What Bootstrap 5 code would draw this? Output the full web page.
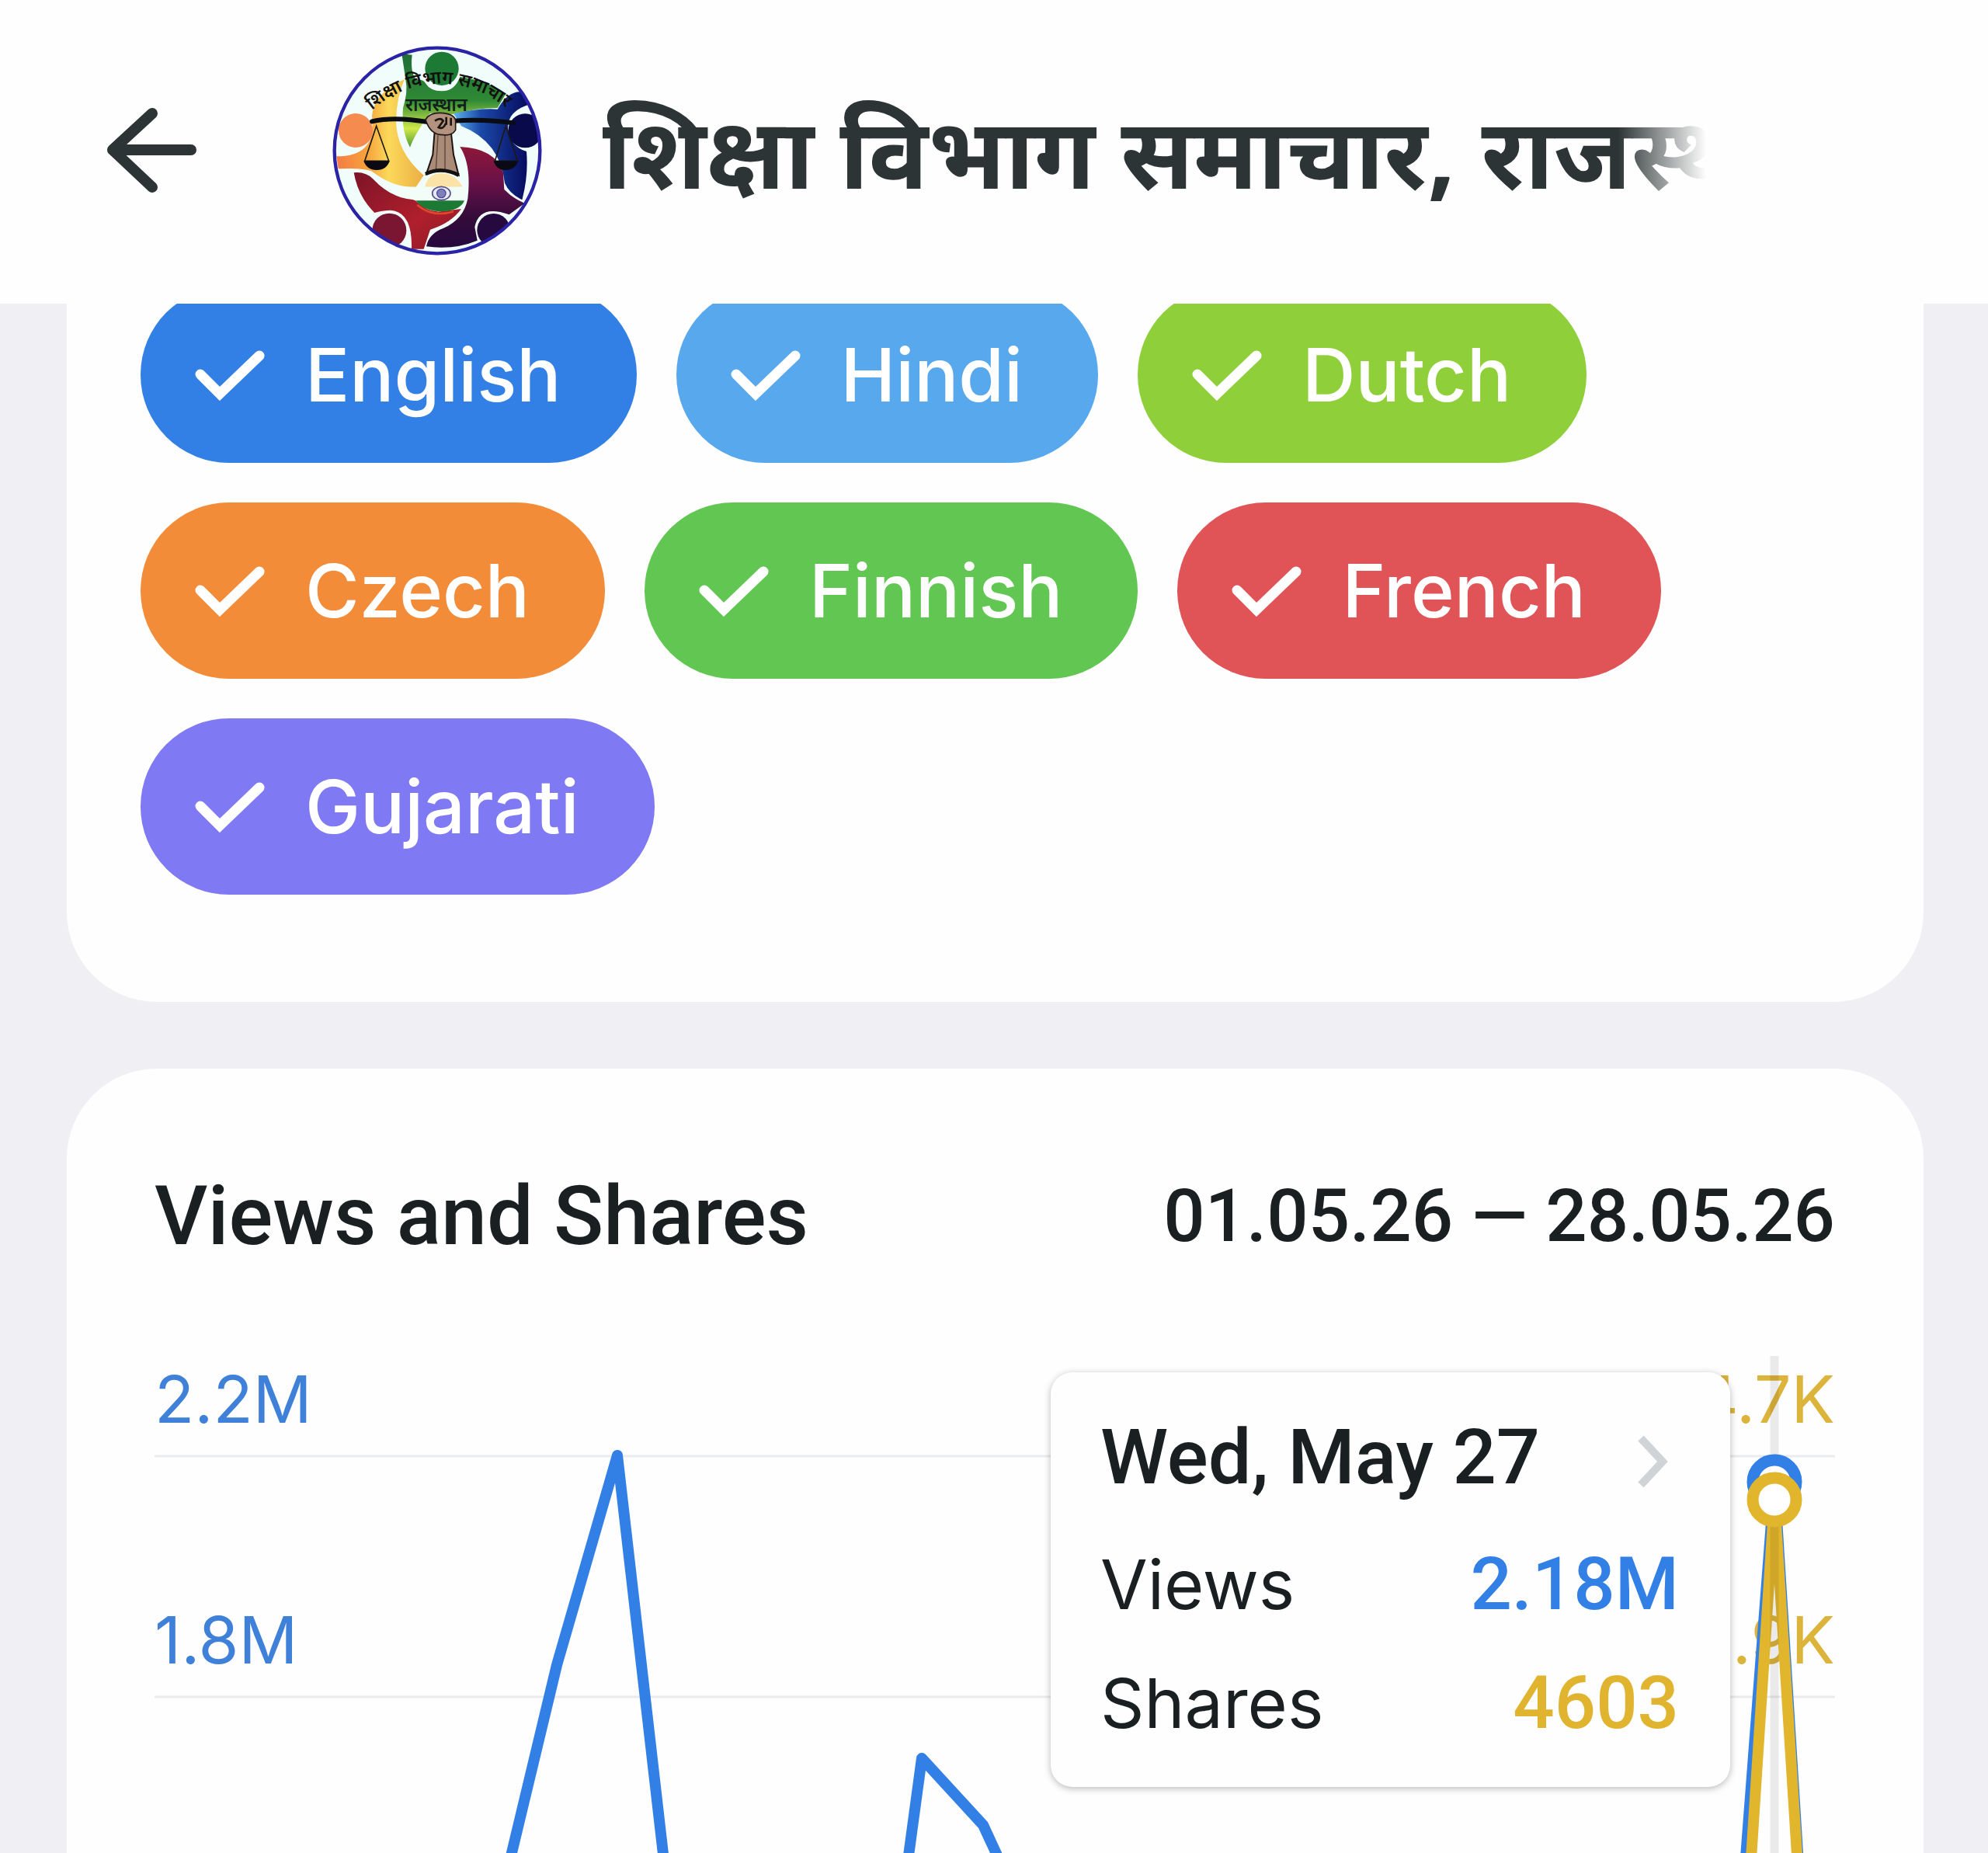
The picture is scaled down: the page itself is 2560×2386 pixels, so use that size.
<!DOCTYPE html>
<html lang="en">
<head>
    <meta charset="UTF-8">
    <meta name="viewport" content="width=device-width, initial-scale=1.0">
    <title>Statistics</title>
    <link href="https://cdn.jsdelivr.net/npm/bootstrap@5.3.0/dist/css/bootstrap.min.css" rel="stylesheet">
    <style>
        body {
            background-color: #f0f0f4;
            color: #1a1f22;
            font-family: Inter, "Liberation Sans", sans-serif;
        }
        .top-bar {
            height: 391px;
            flex-shrink: 0;
            padding: 0 363px 4px 137px;
            background-color: #fefefe;
            z-index: 10;
        }
        .back-btn {
            margin-right: 174px;
            line-height: 0;
        }
        .avatar {
            flex-shrink: 0;
            margin-right: 77px;
        }
        .avatar text {
            font-family: "Noto Sans", sans-serif;
            font-weight: 600;
        }
        .channel-name {
            color: #2d3436;
            font-family: "Noto Sans", sans-serif;
            font-size: 127px;
            font-weight: 700;
            line-height: 180px;
            -webkit-mask-image: linear-gradient(to right, #000 92%, transparent);
            mask-image: linear-gradient(to right, #000 92%, transparent);
        }
        .content {
            padding: 0 83px 0 86px;
            gap: 86px;
        }
        .panel {
            background-color: #fefefe;
            border-radius: 116px;
        }
        .lang-panel {
            margin-top: -22px;
            padding: 0 95px 138px;
            gap: 51px;
            border-top-left-radius: 0;
            border-top-right-radius: 0;
        }
        .chip {
            height: 227px;
            padding: 0 97px 0 70px;
            gap: 52px;
            border-radius: 114px;
            color: #fff;
            font-size: 95px;
            font-weight: 500;
            line-height: 120px;
            cursor: pointer;
        }
        .chip-blue { background-color: #327fe5; }
        .chip-sky { background-color: #58a8ed; }
        .chip-lime { background-color: #8fcf39; }
        .chip-orange { background-color: #f28c39; }
        .chip-green { background-color: #61c752; }
        .chip-red { background-color: #e05356; }
        .chip-violet { background-color: #7f79f3; }
        .chart-panel {
            padding: 128px 114px 0 113px;
        }
        .chart-title {
            font-family: Roboto, sans-serif;
            font-size: 106px;
            font-weight: 500;
            line-height: 124px;
        }
        .chart-range {
            font-family: Roboto, sans-serif;
            font-size: 94px;
            font-weight: 500;
            line-height: 110px;
        }
        .chart-area {
            margin-top: 112px;
        }
        .chart-area text {
            font-size: 84px;
        }
        .tip {
            top: 27px;
            right: 135px;
            width: 875px;
            padding: 44px 66px 54px 64px;
            gap: 46px;
            border-radius: 28px;
            background-color: #fefefe;
            box-shadow: 0 2px 10px rgba(0, 0, 0, .28);
            color: #1a1f22;
            font-size: 88px;
            line-height: 107px;
        }
        .tip-date {
            font-family: Roboto, sans-serif;
            font-size: 99px;
            font-weight: 500;
            line-height: 130px;
        }
        .tip-value {
            font-family: Roboto, sans-serif;
            font-size: 94px;
            font-weight: 500;
        }
        .text-views { color: #327fe5; }
        .text-shares { color: #e0b42f; }
    </style>
</head>
<body>
<svg class="d-none">
    <symbol id="tick" viewBox="0 0 90 66">
        <path d="M7 32L32 57L83 8" fill="none" stroke="#fff" stroke-width="13" stroke-linecap="round"/>
    </symbol>
</svg>
<div class="vh-100 overflow-hidden d-flex flex-column">
    <header class="top-bar d-flex align-items-center position-relative">
        <button type="button" class="back-btn btn p-0 border-0" aria-label="Back">
            <svg width="116" height="112" viewBox="0 0 116 112">
                <path d="M59 8L8 55L59 103M8 55H109" fill="none" stroke="#2d3436" stroke-width="14" stroke-linecap="round" stroke-linejoin="round"/>
            </svg>
        </button>
        <svg class="avatar" width="272" height="270" viewBox="49 60 816 810">
            <defs>
                <clipPath id="disc"><circle cx="457" cy="465" r="396"/></clipPath>
                <linearGradient id="gGreen" x1="0" y1="0" x2="0" y2="1">
                    <stop offset="0" stop-color="#1f6e34"/><stop offset=".5" stop-color="#2f8a35"/><stop offset=".8" stop-color="#cfe84a"/><stop offset="1" stop-color="#4f9a35"/>
                </linearGradient>
                <linearGradient id="gYellow" x1="0" y1="0" x2="1" y2="0">
                    <stop offset="0" stop-color="#f57a45"/><stop offset=".35" stop-color="#f6a23c"/><stop offset=".6" stop-color="#fbd95a"/><stop offset="1" stop-color="#ecae45"/>
                </linearGradient>
                <linearGradient id="gRed" x1="0" y1="0" x2="1" y2="1">
                    <stop offset="0" stop-color="#7c1428"/><stop offset=".6" stop-color="#b01f2c"/><stop offset="1" stop-color="#8c1a2a"/>
                </linearGradient>
                <linearGradient id="gPurple" x1="0" y1="0" x2="0" y2="1">
                    <stop offset="0" stop-color="#8d1838"/><stop offset=".35" stop-color="#6a1148"/><stop offset=".7" stop-color="#340c3a"/><stop offset="1" stop-color="#27093f"/>
                </linearGradient>
                <linearGradient id="gBlue" x1="0" y1="0" x2="1" y2="0">
                    <stop offset="0" stop-color="#5fb4f0"/><stop offset=".35" stop-color="#1b49a8"/><stop offset="1" stop-color="#05075a"/>
                </linearGradient>
                <path id="arc" d="M205 310Q320 208 470 206Q625 208 748 322"/>
            </defs>
            <circle cx="457" cy="465" r="398" fill="#f0fdfb"/>
            <g clip-path="url(#disc)">
                <path d="M320 90L360 95Q352 160 375 190Q405 190 412 205Q430 235 475 235Q525 235 545 180Q650 195 722 245L690 300Q600 300 530 325L430 320Q370 400 352 452Q318 390 325 300Q345 240 335 190Z" fill="url(#gGreen)"/>
                <circle cx="475" cy="148" r="65" fill="#1d7a35"/>
                <path d="M330 190Q215 240 205 330Q215 420 175 455Q140 487 68 487L75 535Q170 530 205 545Q290 610 375 605L405 560Q300 470 298 350Q300 260 330 190Z" fill="url(#gYellow)"/>
                <circle cx="142" cy="387" r="66" fill="#f68b50"/>
                <path d="M520 322Q620 300 690 305Q730 235 780 238L818 285Q728 310 730 380Q740 450 802 468Q810 560 785 655Q735 630 718 590Q700 430 550 370Z" fill="url(#gBlue)"/>
                <circle cx="797" cy="388" r="66" fill="#080a4c"/>
                <path d="M135 550Q180 545 210 575Q280 650 370 655Q420 705 470 700L550 690Q510 745 430 770L405 845H358Q362 700 275 695Q235 697 215 705Q150 640 135 550Z" fill="url(#gRed)"/>
                <circle cx="272" cy="773" r="66" fill="#7a1632"/>
                <path d="M545 450Q680 455 712 550L716 615Q750 650 795 668L735 712Q620 670 602 760L612 812Q520 850 415 835Q425 785 480 765Q560 730 575 650Q590 520 545 450Z" fill="url(#gPurple)"/>
                <circle cx="675" cy="772" r="64" fill="#25093f"/>
                <path d="M370 605H410Q420 552 475 552Q530 555 555 605Z" fill="#fbe3a8"/>
                <path d="M330 605H572V657H372Q340 650 300 625Z" fill="#f2fdf8"/>
                <path d="M375 658H562Q545 700 465 700Q400 695 375 658Z" fill="#1d7a35"/>
                <path d="M380 675Q440 725 520 700" fill="none" stroke="#e04a2a" stroke-width="7"/>
                <ellipse cx="473" cy="630" rx="35" ry="26" fill="#e7e7f5" stroke="#54518a" stroke-width="5"/>
                <circle cx="473" cy="630" r="17" fill="#7f80bb" stroke="#4c4a90" stroke-width="4"/>
                <path d="M447 390H510L520 480L540 560Q475 530 415 555L440 480Z" fill="#a98b78" stroke="#1c1411" stroke-width="6"/>
                <path d="M487 405V545M460 405L452 540" stroke="#5c4437" stroke-width="4"/>
                <path d="M412 555Q475 525 540 560" fill="none" stroke="#111" stroke-width="14"/>
                <path d="M205 352Q290 332 420 354M520 350Q640 342 750 358" fill="none" stroke="#090c12" stroke-width="18" stroke-linecap="round"/>
                <path d="M412 345Q430 315 480 320Q525 325 528 350V385Q515 408 480 404Q430 405 412 345Z" fill="#b39380" stroke="#241a16" stroke-width="5"/>
                <path d="M448 350Q470 335 480 350L462 375Q480 385 490 360M492 335V365M510 338V368" fill="none" stroke="#1c1411" stroke-width="8"/>
                <path d="M222 370L177 505H270ZM722 370L680 505H768Z" fill="none" stroke="#1b1a14" stroke-width="5"/>
                <path d="M173 505H273Q262 540 223 540Q185 540 173 505ZM675 505H770Q758 540 720 540Q685 540 675 505Z" fill="#0b0a14"/>
                <text font-size="70" fill="#12100f"><textPath href="#arc">शिक्षा विभाग समाचार</textPath></text>
                <text x="334" y="313" font-size="70" fill="#12201a">राजस्थान</text>
            </g>
            <circle cx="457" cy="465" r="397" fill="none" stroke="#2a23a6" stroke-width="13"/>
        </svg>
        <h1 class="channel-name flex-grow-1 m-0 overflow-hidden text-nowrap" lang="hi">शिक्षा विभाग समाचार, राजस्थान</h1>
    </header>

    <main class="content d-flex flex-column">
        <section class="panel lang-panel d-flex flex-wrap flex-shrink-0">
            <input type="checkbox" class="btn-check" id="lang-en" checked>
            <label class="chip chip-blue d-flex align-items-center" for="lang-en"><svg width="90" height="66"><use href="#tick"/></svg>English</label>
            <input type="checkbox" class="btn-check" id="lang-hi" checked>
            <label class="chip chip-sky d-flex align-items-center" for="lang-hi"><svg width="90" height="66"><use href="#tick"/></svg>Hindi</label>
            <input type="checkbox" class="btn-check" id="lang-nl" checked>
            <label class="chip chip-lime d-flex align-items-center" for="lang-nl"><svg width="90" height="66"><use href="#tick"/></svg>Dutch</label>
            <input type="checkbox" class="btn-check" id="lang-cs" checked>
            <label class="chip chip-orange d-flex align-items-center" for="lang-cs"><svg width="90" height="66"><use href="#tick"/></svg>Czech</label>
            <input type="checkbox" class="btn-check" id="lang-fi" checked>
            <label class="chip chip-green d-flex align-items-center" for="lang-fi"><svg width="90" height="66"><use href="#tick"/></svg>Finnish</label>
            <input type="checkbox" class="btn-check" id="lang-fr" checked>
            <label class="chip chip-red d-flex align-items-center" for="lang-fr"><svg width="90" height="66"><use href="#tick"/></svg>French</label>
            <input type="checkbox" class="btn-check" id="lang-gu" checked>
            <label class="chip chip-violet d-flex align-items-center" for="lang-gu"><svg width="90" height="66"><use href="#tick"/></svg>Gujarati</label>
        </section>

        <section class="panel chart-panel flex-shrink-0">
            <div class="d-flex justify-content-between align-items-center">
                <h2 class="chart-title m-0">Views and Shares</h2>
                <div class="chart-range">01.05.26 — 28.05.26</div>
            </div>
            <div class="chart-area position-relative">
                <svg class="d-block w-100" viewBox="0 0 2164 900">
                    <path d="M0 135H2164M0 445H2164" stroke="#e9ebed" stroke-width="3"/>
                    <g fill="#3f80d8">
                        <text x="0" y="92">2.2M</text>
                        <text x="0" y="402">1.8M</text>
                    </g>
                    <g fill="#dcb43b" text-anchor="end">
                        <text x="2164" y="92">4.7K</text>
                        <text x="2164" y="402">3.9K</text>
                    </g>
                    <g fill="none" stroke-width="14" stroke-linejoin="round">
                        <path d="M399 900L518 404L596 134L684 900M937 900L988 524L1067 610L1201 900" stroke="#327fe5"/>
                        <path d="M2030 900L2086 168L2132 900" stroke="#327fe5"/>
                        <path d="M2040 900L2086 190L2131 900" stroke="#e1b52c"/>
                    </g>
                    <path d="M2086 6V900" stroke="#000" stroke-opacity=".08" stroke-width="11"/>
                    <circle cx="2086" cy="168" r="28" fill="#fff" stroke="#327fe5" stroke-width="15"/>
                    <circle cx="2086" cy="191" r="28" fill="#fff" stroke="#e1b52c" stroke-width="15"/>
                </svg>
                <a href="#" class="tip position-absolute d-flex flex-column text-decoration-none">
                    <div class="d-flex justify-content-between align-items-center">
                        <span class="tip-date">Wed, May 27</span>
                        <svg width="54" height="78" viewBox="0 -12 54 78">
                            <path d="M5 3L33 33L5 63" fill="none" stroke="#d0d4d6" stroke-width="10"/>
                        </svg>
                    </div>
                    <div class="d-flex justify-content-between">
                        <span>Views</span>
                        <span class="tip-value text-views">2.18M</span>
                    </div>
                    <div class="d-flex justify-content-between">
                        <span>Shares</span>
                        <span class="tip-value text-shares">4603</span>
                    </div>
                </a>
            </div>
        </section>
    </main>
</div>
<script src="https://cdn.jsdelivr.net/npm/bootstrap@5.3.0/dist/js/bootstrap.bundle.min.js"></script>
</body>
</html>
